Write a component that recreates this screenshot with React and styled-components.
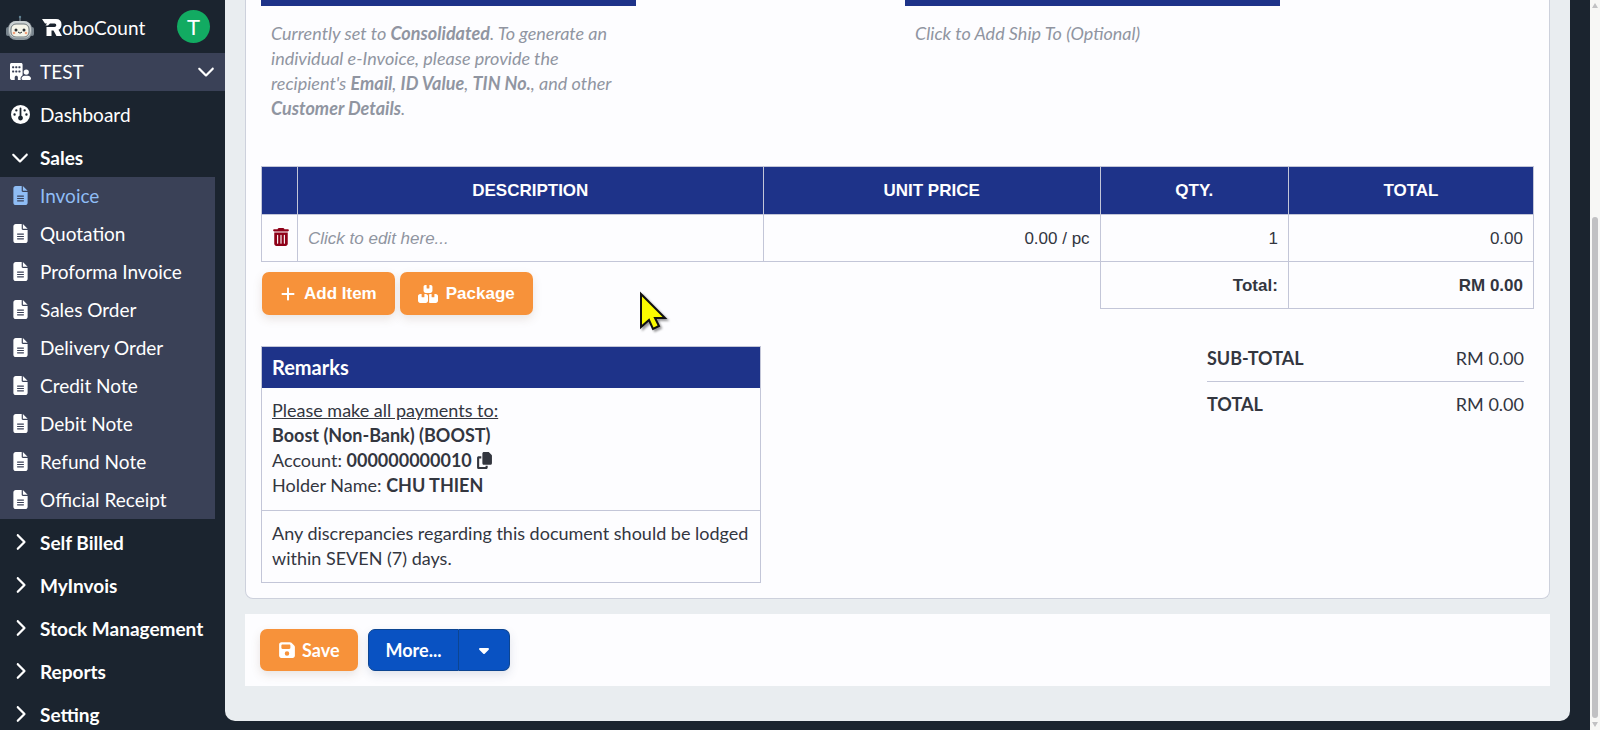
import styled, { createGlobalStyle, css } from "styled-components";
import {
  FaBoxesStacked,
  FaBuildingUser,
  FaCaretDown,
  FaChevronDown,
  FaChevronRight,
  FaCopy,
  FaFileLines,
  FaFloppyDisk,
  FaGauge,
  FaPlus,
  FaTrashCan,
} from "react-icons/fa6";

const GlobalStyle = createGlobalStyle`
  * {
    box-sizing: border-box;
  }

  body {
    margin: 0;
    background-color: #1b242f;
    color: #33363f;
    font-family: Lato, "Open Sans", sans-serif;
    font-size: 18px;
    line-height: 25px;
  }

  button {
    font-family: inherit;
    cursor: pointer;
  }
`;

const Layout = styled.div`
  display: flex;
  height: 100vh;
  overflow: hidden;
`;

const Sidebar = styled.aside`
  flex: 0 0 225px;
  overflow: hidden;
  color: white;
  font-size: 19px;
`;

const Brand = styled.div`
  display: flex;
  align-items: center;
  height: 53px;
  padding: 0 15px 0 5px;
`;

const BrandLink = styled.a`
  display: flex;
  flex: 1;
  align-items: center;
  padding-top: 2px;
  color: white;
  font-size: 19px;
  text-decoration: none;

  svg:first-child {
    margin-right: 7px;
  }
`;

const Avatar = styled.button`
  width: 33px;
  height: 33px;
  padding: 0;
  border: none;
  border-radius: 50%;
  background-color: #12ab62;
  color: white;
  font-size: 22px;
  line-height: 33px;
`;

const Company = styled.button`
  display: flex;
  align-items: center;
  width: 100%;
  height: 38px;
  padding: 0 10px 2px 0;
  border: none;
  background-color: #3a4157;
  color: white;
  font-size: 19px;

  & > svg {
    margin-left: auto;
  }
`;

const IconSlot = styled.span`
  display: flex;
  flex: 0 0 40px;
  justify-content: center;
`;

const NavLink = styled.a`
  display: flex;
  align-items: center;
  height: 38px;
  padding-bottom: 2px;
  color: ${(props) => (props.$active ? "#8fbdf5" : "white")};
  font-weight: ${(props) => (props.$bold ? 700 : 400)};
  text-decoration: none;
  white-space: nowrap;
`;

const Nav = styled.nav`
  & > ${NavLink} {
    margin-top: 5px;
  }
`;

const SubMenu = styled.div`
  margin-right: 10px;
  background-color: #3a4157;
`;

const Main = styled.main`
  flex: 1;
  min-width: 0;
  margin: 0 20px 9px 0;
  padding: 0 20px;
  border-radius: 0 0 10px 10px;
  background-color: #e9edf0;
`;

const Card = styled.section`
  padding: 0 15px 15px;
  border: 1px solid #cdd1dc;
  border-top: none;
  border-radius: 0 0 8px 8px;
  background-color: #fdfdff;
`;

const Parties = styled.div`
  display: grid;
  grid-template-columns: 1fr 1fr;
  gap: 15px;
  min-height: 166px;
`;

const Party = styled.div`
  max-width: 375px;
  border-top: 6px solid #1e3389;
`;

const Hint = styled.p`
  margin: 0;
  padding: 15px 10px;
  color: #9095a1;
  font-style: italic;
`;

const Items = styled.table`
  width: 100%;
  table-layout: fixed;
  border-collapse: collapse;
  font-family: "Liberation Sans", Arial, sans-serif;
  font-size: 17px;
`;

const cell = css`
  padding: 0 10px;
  border: 1px solid #c3c6d8;
`;

const Th = styled.th`
  ${cell}
  width: ${(props) => props.$width};
  height: 48px;
  background-color: #1e3389;
  color: white;
`;

const Td = styled.td`
  ${cell}
  height: 47px;
  text-align: right;
  font-weight: ${(props) => (props.$bold ? 700 : 400)};
`;

const EmptyTd = styled.td`
  border: none;
`;

const DescriptionTd = styled(Td)`
  color: #9095a1;
  font-style: italic;
  text-align: left;
`;

const IconButton = styled.button`
  display: inline-flex;
  padding: 0;
  border: none;
  background: none;
  color: ${(props) => props.$color || "inherit"};
  font-size: ${(props) => props.$size || 18}px;
  vertical-align: -2px;
`;

const Button = styled.button`
  display: inline-flex;
  align-items: center;
  gap: 6px;
  height: ${(props) => (props.$small ? 42 : 43)}px;
  padding: 0 18px;
  border: none;
  border-radius: 7px;
  background-color: #f7923a;
  box-shadow: 0 4px 10px rgba(120, 90, 60, 0.15);
  color: white;
  font-size: 18px;
  font-weight: 700;
`;

/* pulled up beside the total row of the table */
const ItemActions = styled.div`
  position: relative;
  display: flex;
  gap: 5px;
  width: max-content;
  margin-top: -37px;
  padding-left: 1px;

  ${Button} {
    gap: 8px;
    font-family: "Liberation Sans", Arial, sans-serif;
    font-size: 17px;
  }
`;

const Summary = styled.div`
  display: flex;
  align-items: flex-start;
  justify-content: space-between;
  padding-top: 20px;
`;

const Remarks = styled.div`
  width: 500px;
  margin-top: 11px;
  border: 1px solid #c3c6d8;
`;

const RemarksTitle = styled.h2`
  margin: 0;
  padding: 8px 10px;
  background-color: #1e3389;
  color: white;
  font-size: 20px;
  line-height: 25px;
`;

const RemarksBody = styled.div`
  padding: 10px 10px 12px;

  & + & {
    padding-bottom: 11px;
    border-top: 1px solid #c3c6d8;
  }
`;

const Totals = styled.dl`
  width: 317px;
  margin: 0 10px 0 0;
`;

const TotalRow = styled.div`
  display: flex;
  align-items: center;
  justify-content: space-between;
  height: 46px;

  & + & {
    border-top: 1px solid #c3c6d8;
  }

  dt {
    font-weight: 700;
  }

  dd {
    margin: 0;
  }
`;

const Footer = styled.div`
  display: flex;
  gap: 10px;
  margin-top: 15px;
  padding: 15px;
  background-color: #fdfdff;
`;

const SplitButton = styled.div`
  display: flex;
  border-radius: 7px;
  box-shadow: 0 4px 10px rgba(60, 80, 120, 0.15);

  ${Button} {
    padding: 0 17px;
    border: 1px solid #0c4592;
    background-color: #0952c2;
    box-shadow: none;
  }

  ${Button}:first-child {
    border-radius: 7px 0 0 7px;
  }

  ${Button}:last-child {
    border-left: none;
    border-radius: 0 7px 7px 0;
  }
`;

const Scrollbar = styled.div`
  display: flex;
  flex: 0 0 10px;
  flex-direction: column;
  align-items: center;
  justify-content: space-between;
  padding: 3px 0;
  background-color: #f7f7f5;
`;

const ScrollTrack = styled.div`
  display: flex;
  flex: 1;
  flex-direction: column;
  justify-content: flex-end;
  margin: 4px 0;
`;

const ScrollThumb = styled.div`
  width: 6px;
  height: 71%;
  border-radius: 3px;
  background-color: #c1c1c3;
`;

const Pointer = styled.svg`
  position: fixed;
  top: 290px;
  left: 638px;
  filter: drop-shadow(2px 2px 1px rgba(0, 0, 0, 0.4));
  pointer-events: none;
`;

const documents = [
  "Invoice",
  "Quotation",
  "Proforma Invoice",
  "Sales Order",
  "Delivery Order",
  "Credit Note",
  "Debit Note",
  "Refund Note",
  "Official Receipt",
];

const groups = ["Self Billed", "MyInvois", "Stock Management", "Reports", "Setting"];

const Robot = () => (
  <svg width="30" height="28" viewBox="0 0 30 28" aria-hidden="true">
    <path d="M15 3v4" stroke="#8d99a5" strokeWidth="1" />
    <circle cx="15" cy="3" r="1.2" fill="#5f8292" />
    <rect x="1" y="13" width="4" height="9" rx="2" fill="#77838c" />
    <rect x="25" y="13" width="4" height="9" rx="2" fill="#77838c" />
    <rect x="3" y="7" width="24" height="19" rx="8" fill="#8d979d" />
    <rect x="4" y="7" width="22" height="17" rx="7" fill="#c9d0d2" />
    <rect x="6" y="10" width="18" height="13" rx="5" fill="#f5f5ea" stroke="#6c777b" />
    <circle cx="11" cy="16" r="1.5" fill="#2a2f33" />
    <circle cx="19" cy="16" r="1.5" fill="#2a2f33" />
    <circle cx="9" cy="19" r="1.3" fill="#f2a17c" />
    <circle cx="21" cy="19" r="1.3" fill="#f2a17c" />
    <path d="M13 18q2 2.400 4 0" fill="none" stroke="#2a2f33" />
  </svg>
);

const Mark = () => (
  <svg width="20" height="18" viewBox="0 0 20 18" aria-hidden="true">
    <path
      d="M0 0h14q5.500 0 5.500 5.500 0 4-3 5.200L20 17h-5.500l-3-5.500H9.500V17H4.500V8h8q1.800 0 1.800-1.800T12.500 4.500H8L6 6.500H3.500L5 4.500H3Z"
      fill="white"
    />
  </svg>
);

const App = () => {
  return (
    <Layout>
      <GlobalStyle />
      <Sidebar>
        <Brand>
          <BrandLink href="#" aria-label="RoboCount">
            <Robot />
            <Mark />
            oboCount
          </BrandLink>
          <Avatar>T</Avatar>
        </Brand>
        <Company>
          <IconSlot>
            <FaBuildingUser size={21} />
          </IconSlot>
          TEST
          <FaChevronDown size={18} />
        </Company>
        <Nav>
          <NavLink href="#">
            <IconSlot>
              <FaGauge />
            </IconSlot>
            Dashboard
          </NavLink>
          <NavLink href="#" $bold>
            <IconSlot>
              <FaChevronDown size={18} />
            </IconSlot>
            Sales
          </NavLink>
          <SubMenu>
            {documents.map((name) => (
              <NavLink key={name} href="#" $active={name === "Invoice"}>
                <IconSlot>
                  <FaFileLines />
                </IconSlot>
                {name}
              </NavLink>
            ))}
          </SubMenu>
          {groups.map((name) => (
            <NavLink key={name} href="#" $bold>
              <IconSlot>
                <FaChevronRight size={18} />
              </IconSlot>
              {name}
            </NavLink>
          ))}
        </Nav>
      </Sidebar>

      <Main>
        <Card>
          <Parties>
            <Party>
              <Hint>
                Currently set to <b>Consolidated</b>. To generate an individual
                e-Invoice, please provide the recipient's <b>Email</b>,{" "}
                <b>ID Value</b>, <b>TIN No.</b>, and other{" "}
                <b>Customer Details</b>.
              </Hint>
            </Party>
            <Party>
              <Hint>Click to Add Ship To (Optional)</Hint>
            </Party>
          </Parties>

          <Items>
            <thead>
              <tr>
                <Th $width="36px" aria-label="Actions" />
                <Th $width="36.6%">DESCRIPTION</Th>
                <Th $width="26.5%">UNIT PRICE</Th>
                <Th $width="14.8%">QTY.</Th>
                <Th>TOTAL</Th>
              </tr>
            </thead>
            <tbody>
              <tr>
                <Td>
                  <IconButton $color="#8e0018" aria-label="Delete item">
                    <FaTrashCan />
                  </IconButton>
                </Td>
                <DescriptionTd>Click to edit here...</DescriptionTd>
                <Td>0.00 / pc</Td>
                <Td>1</Td>
                <Td>0.00</Td>
              </tr>
              <tr>
                <EmptyTd colSpan={3} />
                <Td $bold>Total:</Td>
                <Td $bold>RM 0.00</Td>
              </tr>
            </tbody>
          </Items>
          <ItemActions>
            <Button>
              <FaPlus size={16} />
              Add Item
            </Button>
            <Button>
              <FaBoxesStacked size={20} />
              Package
            </Button>
          </ItemActions>

          <Summary>
            <Remarks>
              <RemarksTitle>Remarks</RemarksTitle>
              <RemarksBody>
                <u>Please make all payments to:</u>
                <br />
                <b>Boost (Non-Bank) (BOOST)</b>
                <br />
                Account: <b>000000000010</b>{" "}
                <IconButton $size={17} aria-label="Copy account">
                  <FaCopy />
                </IconButton>
                <br />
                Holder Name: <b>CHU THIEN</b>
              </RemarksBody>
              <RemarksBody>
                Any discrepancies regarding this document should be lodged
                within SEVEN (7) days.
              </RemarksBody>
            </Remarks>
            <Totals>
              <TotalRow>
                <dt>SUB-TOTAL</dt>
                <dd>RM 0.00</dd>
              </TotalRow>
              <TotalRow>
                <dt>TOTAL</dt>
                <dd>RM 0.00</dd>
              </TotalRow>
            </Totals>
          </Summary>
        </Card>

        <Footer>
          <Button $small>
            <FaFloppyDisk />
            Save
          </Button>
          <SplitButton>
            <Button $small>More...</Button>
            <Button $small aria-label="More actions">
              <FaCaretDown size={16} />
            </Button>
          </SplitButton>
        </Footer>
      </Main>

      <Scrollbar aria-hidden="true">
        <svg width="6" height="5" viewBox="0 0 6 5">
          <path d="M3 0l3 5H0Z" fill="#c1c1c3" />
        </svg>
        <ScrollTrack>
          <ScrollThumb />
        </ScrollTrack>
        <svg width="6" height="5" viewBox="0 0 6 5">
          <path d="M3 5L0 0h6Z" fill="#c1c1c3" />
        </svg>
      </Scrollbar>

      <Pointer width="32" height="44" viewBox="0 0 32 44" aria-hidden="true">
        <path
          d="M3 4v33l8-7 4 9 6-3-4-8h10Z"
          fill="#fbfb00"
          stroke="#111"
          strokeWidth="2"
        />
      </Pointer>
    </Layout>
  );
};

export default App;
